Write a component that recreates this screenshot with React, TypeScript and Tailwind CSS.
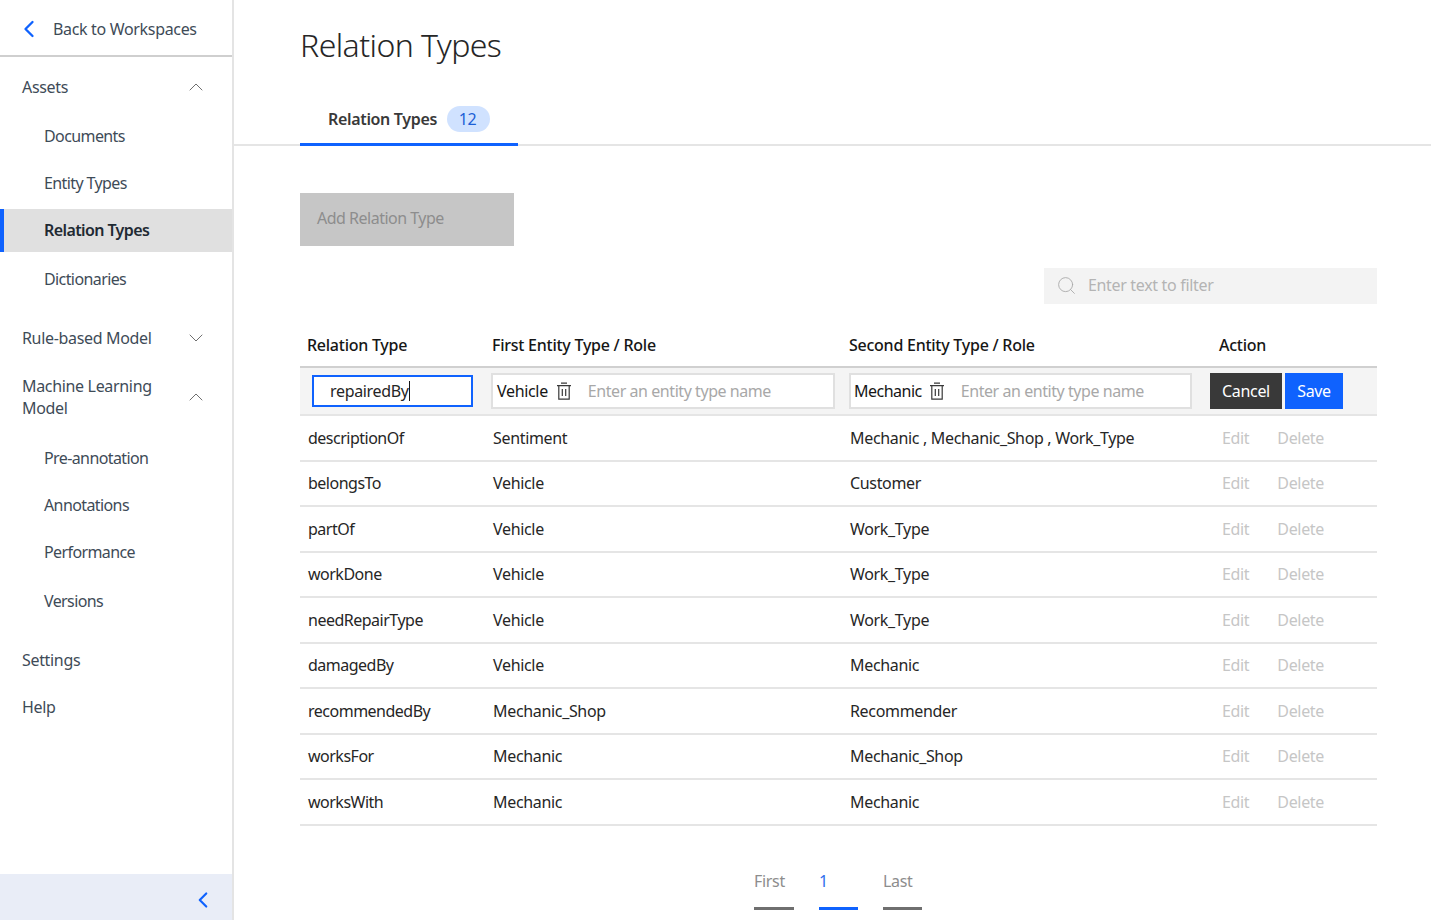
import { ChevronDown, ChevronLeft, ChevronUp, Search } from 'lucide-react'

const rows = [
  ['descriptionOf', 'Sentiment', 'Mechanic , Mechanic_Shop , Work_Type'],
  ['belongsTo', 'Vehicle', 'Customer'],
  ['partOf', 'Vehicle', 'Work_Type'],
  ['workDone', 'Vehicle', 'Work_Type'],
  ['needRepairType', 'Vehicle', 'Work_Type'],
  ['damagedBy', 'Vehicle', 'Mechanic'],
  ['recommendedBy', 'Mechanic_Shop', 'Recommender'],
  ['worksFor', 'Mechanic', 'Mechanic_Shop'],
  ['worksWith', 'Mechanic', 'Mechanic'],
]

function SubItem({ label, className = '' }: { label: string; className?: string }) {
  return <div className={`flex items-center pl-[44px] tracking-[-0.6px] text-[#3e4b57] ${className}`}>{label}</div>
}

function GroupItem({ label, open, className = '' }: { label: string; open?: boolean; className?: string }) {
  const Icon = open ? ChevronUp : ChevronDown
  return (
    <div className={`flex items-center justify-between pl-[22px] pr-[24px] text-[#3e4b57] ${className}`}>
      <span>{label}</span>
      <Icon size={24} strokeWidth={1} className="text-[#6f6f6f]" />
    </div>
  )
}

function TrashIcon() {
  return (
    <svg width="16" height="18" viewBox="0 0 16 18" fill="none" stroke="#393939" strokeWidth="1.2" className="shrink-0">
      <path d="M5 1.2h6M1 3.6h14M2.8 3.6v13.6h10.4V3.6M6.3 7v7M9.7 7v7" />
    </svg>
  )
}

function Sidebar() {
  return (
    <aside className="flex h-[920px] w-[234px] shrink-0 flex-col border-r-2 border-[#e4e4e4] bg-white">
      <div className="flex h-[57px] shrink-0 items-center border-b-2 border-[#cfcfcf] pl-[15px] pt-[2px] text-[#3e4b57]">
        <ChevronLeft size={28} strokeWidth={2} className="text-[#0f62fe]" />
        <span className="ml-[10px]">Back to Workspaces</span>
      </div>
      <GroupItem label="Assets" open className="mt-[10px] h-[40px]" />
      <SubItem label="Documents" className="mt-[9px] h-[40px]" />
      <SubItem label="Entity Types" className="mt-[7px] h-[40px]" />
      <div className="mt-[6px] flex h-[43px] items-center border-l-4 border-[#0f62fe] bg-[#e0e0e0] pb-[1px] pl-[40px] font-semibold tracking-[-0.6px] text-[#1f2a33]">
        Relation Types
      </div>
      <SubItem label="Dictionaries" className="mt-[7px] h-[40px]" />
      <GroupItem label="Rule-based Model" className="mt-[19px] h-[40px]" />
      <GroupItem label="Machine Learning Model" open className="mt-[10px] h-[58px] leading-[22px] [&>span]:w-[140px]" />
      <SubItem label="Pre-annotation" className="mt-[12px] h-[40px]" />
      <SubItem label="Annotations" className="mt-[7px] h-[40px]" />
      <SubItem label="Performance" className="mt-[7px] h-[40px]" />
      <SubItem label="Versions" className="mt-[9px] h-[40px]" />
      <div className="mt-[19px] flex h-[40px] items-center pl-[22px] text-[#3e4b57]">Settings</div>
      <div className="mt-[7px] flex h-[40px] items-center pl-[22px] text-[#3e4b57]">Help</div>
      <div className="mt-auto flex h-[46px] items-center justify-end bg-[#e9edf7] pr-[16px] pt-[6px]">
        <ChevronLeft size={26} strokeWidth={2} className="text-[#0f62fe]" />
      </div>
    </aside>
  )
}

function EntityBox({ name, className, iconClass }: { name: string; className: string; iconClass: string }) {
  return (
    <div className={`flex h-[36px] items-center border-2 border-[#e0e0e0] bg-white ${className}`}>
      <span className="text-[#161616]">{name}</span>
      <span className={iconClass}><TrashIcon /></span>
      <span className="ml-[16px] tracking-[-0.44px] text-[#a8a8a8]">Enter an entity type name</span>
    </div>
  )
}

export default function App() {
  return (
    <div className="flex h-[920px] w-[1431px] overflow-hidden bg-white font-['Noto_Sans',sans-serif] text-[16px] tracking-[-0.33px]">
      <Sidebar />
      <main className="min-w-0 flex-1">
        <h1 className="ml-[66px] mb-[2px] flex h-[90px] items-center text-[32px] font-light tracking-[-0.57px] text-[#262626]">Relation Types</h1>
        <div className="h-[54px] border-b-2 border-[#e5e5e5] pl-[66px]">
          <div className="flex h-[54px] w-[218px] items-center border-b-[3px] border-[#0f62fe] pt-[3px] pl-[28px]">
            <span className="font-semibold text-[#393939]">Relation Types</span>
            <span className="ml-[10px] flex h-[26px] w-[43px] items-center justify-center rounded-full bg-[#d0e2ff] pr-[2px] text-[#1d5fd6]">12</span>
          </div>
        </div>
        <div className="pl-[66px] pr-[54px]">
          <div className="mt-[47px] flex h-[53px] w-[214px] items-center bg-[#c6c6c6] pb-[3px] pl-[17px] tracking-[-0.5px] text-[#8d8d8d]">Add Relation Type</div>
          <div className="mt-[22px] flex justify-end">
            <div className="flex h-[36px] w-[333px] items-center bg-[#f3f3f3] pb-[2px] pl-[12px] text-[#b4b4b4]">
              <Search size={21} strokeWidth={1} className="text-[#a8a8a8]" />
              <span className="ml-[11px]">Enter text to filter</span>
            </div>
          </div>
          <div className="mt-[28px] flex h-[36px] items-center border-b-2 border-[#d0d0d0] pb-[8px] font-medium tracking-[-0.25px] text-[#161616]">
            <div className="w-[192px] pl-[7px]">Relation Type</div>
            <div className="w-[357px]">First Entity Type / Role</div>
            <div className="w-[370px]">Second Entity Type / Role</div>
            <div>Action</div>
          </div>
          <div className="flex h-[48px] items-center border-b-2 border-[#e5e5e5] bg-[#f4f4f4] pl-[12px]">
            <div className="flex h-[32px] w-[161px] items-center border-2 border-[#0f62fe] bg-white pl-[16px] text-[#262626]">
              repairedBy<span className="h-[20px] w-px bg-[#161616]" />
            </div>
            <EntityBox name="Vehicle" className="ml-[18px] w-[344px] pl-[4px]" iconClass="ml-[8px]" />
            <EntityBox name="Mechanic" className="ml-[14px] w-[343px] pl-[3px] tracking-[-0.5px]" iconClass="ml-[7px]" />
            <div className="ml-[18px] flex h-[36px] w-[72px] items-center justify-center bg-[#393939] text-white">Cancel</div>
            <div className="ml-[3px] flex h-[36px] w-[58px] items-center justify-center bg-[#0f62fe] text-white">Save</div>
          </div>
          {rows.map(([relation, first, second]) => (
            <div key={relation} className="flex h-[45.5px] items-center border-b-2 border-[#e5e5e5] text-[#262626]">
              <div className="w-[192px] pl-[8px] tracking-[-0.5px]">{relation}</div>
              <div className="w-[358px] pl-[1px]">{first}</div>
              <div className="w-[372px]">{second}</div>
              <div className="text-[#c6c6c6]">Edit</div>
              <div className="ml-[28px] text-[#c6c6c6]">Delete</div>
            </div>
          ))}
          <div className="mt-[42px] flex justify-center gap-[25px] pr-[1px] text-[#8d8d8d]">
            <div className="h-[42px] w-[40px] border-b-[3px] border-[#6f6f6f] pt-[1px]">First</div>
            <div className="h-[42px] w-[39px] border-b-[3px] border-[#0f62fe] pt-[1px] text-[#2f6fed]">1</div>
            <div className="h-[42px] w-[39px] border-b-[3px] border-[#6f6f6f] pt-[1px]">Last</div>
          </div>
        </div>
      </main>
    </div>
  )
}
